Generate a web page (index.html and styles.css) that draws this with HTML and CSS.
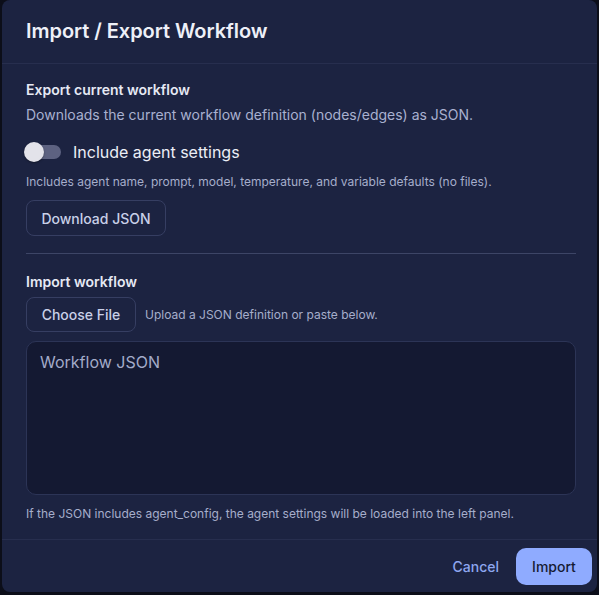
FILE: index.html
```html
<!DOCTYPE html>
<html lang="en">
<head>
    <meta charset="UTF-8">
    <meta name="viewport" content="width=device-width, initial-scale=1.0">
    <title>Import / Export Workflow</title>
    <link rel="stylesheet" href="styles.css">
</head>
<body>
    <div class="dialog">
        <div class="dialog-header">
            <h2 class="dialog-title">Import / Export Workflow</h2>
        </div>

        <div class="dialog-content">
            <div class="section-title">Export current workflow</div>
            <div class="section-desc">Downloads the current workflow definition (nodes/edges) as JSON.</div>

            <label class="toggle-row">
                <span class="toggle"></span>
                <span class="toggle-label">Include agent settings</span>
            </label>
            <div class="hint hint-toggle">Includes agent name, prompt, model, temperature, and variable defaults (no files).</div>

            <button class="btn-outline btn-download">Download JSON</button>

            <hr class="divider">

            <div class="section-title section-import">Import workflow</div>
            <div class="file-row">
                <button class="btn-outline btn-file">Choose File</button>
                <span class="hint">Upload a JSON definition or paste below.</span>
            </div>

            <textarea class="json-input" placeholder="Workflow JSON"></textarea>

            <div class="hint hint-bottom">If the JSON includes agent_config, the agent settings will be loaded into the left panel.</div>
        </div>

        <div class="dialog-footer">
            <button class="btn-text">Cancel</button>
            <button class="btn-primary">Import</button>
        </div>
    </div>
</body>
</html>
```

FILE: styles.css
```css
html, body {
    margin: 0;
    height: 100%;
    background: #0c0e19;
    font-family: Inter, "Noto Sans", sans-serif;
}
.dialog {
    margin: 0 2px 0 2px;
    height: 592px;
    background: #1c2341;
    border-radius: 8px;
    display: flex;
    flex-direction: column;
    overflow: hidden;
}
.dialog-header {
    height: 63px;
    border-bottom: 1px solid #272e4e;
    display: flex;
    align-items: center;
    padding: 0 24px;
}
.dialog-title {
    margin: 0;
    font-size: 20px;
    font-weight: 600;
    letter-spacing: -0.05px;
    color: #eef0f8;
    line-height: 28px;
    padding-bottom: 1px;
}
.dialog-content {
    flex: 1;
    padding: 16px 21px 0 24px;
    display: flex;
    flex-direction: column;
    align-items: flex-start;
}
.section-title {
    font-size: 14px;
    font-weight: 600;
    color: #e6e9f4;
    line-height: 20px;
}
.section-desc {
    margin-top: 4px;
    font-size: 14px;
    line-height: 22px;
    color: #a9b1d0;
}
.toggle-row {
    margin-top: 12px;
    height: 28px;
    display: flex;
    align-items: center;
    cursor: pointer;
}
.toggle {
    position: relative;
    width: 38px;
    height: 20px;
    margin-left: -2px;
}
.toggle::before {
    content: "";
    position: absolute;
    left: 1px;
    top: 3px;
    width: 36px;
    height: 14px;
    border-radius: 7px;
    background: #5d6281;
}
.toggle::after {
    content: "";
    position: absolute;
    left: 0;
    top: 0;
    width: 20px;
    height: 20px;
    border-radius: 50%;
    background: #e3e3ea;
    box-shadow: 0 1px 2px rgba(0, 0, 0, 0.35);
}
.toggle-label {
    margin-left: 11px;
    font-size: 16px;
    font-weight: 400;
    color: #eceef6;
}
.hint {
    font-size: 12px;
    line-height: 16px;
    color: #a6aecb;
}
.hint-toggle {
    margin-top: 8px;
}
.btn-outline {
    font-family: inherit;
    background: transparent;
    border: 1px solid #363e62;
    border-radius: 8px;
    color: #c9d0e8;
    font-size: 14px;
    font-weight: 500;
    cursor: pointer;
}
.btn-download {
    margin-top: 10px;
    height: 36px;
    width: 140px;
}
.divider {
    align-self: stretch;
    margin: 17px 0 0 0;
    border: none;
    height: 1px;
    background: #3d4566;
}
.section-import {
    margin-top: 18px;
}
.file-row {
    margin-top: 5px;
    display: flex;
    align-items: center;
}
.btn-file {
    height: 35px;
    width: 110px;
    margin-right: 9px;
}
.json-input {
    margin-top: 9px;
    align-self: stretch;
    height: 154px;
    box-sizing: border-box;
    background: #141932;
    border: 1px solid #2c3456;
    border-radius: 10px;
    padding: 10px 13px;
    font-family: inherit;
    font-size: 16px;
    color: #e6e9f4;
    resize: none;
    outline: none;
}
.json-input::placeholder {
    color: #a3abc9;
}
.hint-bottom {
    margin-top: 11px;
}
.dialog-footer {
    height: 51px;
    border-top: 1px solid #272e4e;
    display: flex;
    align-items: center;
    justify-content: flex-end;
    padding: 1px 5px 0 0;
    gap: 9px;
}
.btn-text {
    font-family: inherit;
    background: transparent;
    border: none;
    color: #8ea7f0;
    font-size: 14px;
    font-weight: 500;
    padding: 8px 8px;
    cursor: pointer;
}
.btn-primary {
    font-family: inherit;
    width: 76px;
    height: 37px;
    background: #8fabff;
    color: #161b33;
    border: none;
    border-radius: 10px;
    font-size: 14px;
    font-weight: 500;
    cursor: pointer;
}
```
